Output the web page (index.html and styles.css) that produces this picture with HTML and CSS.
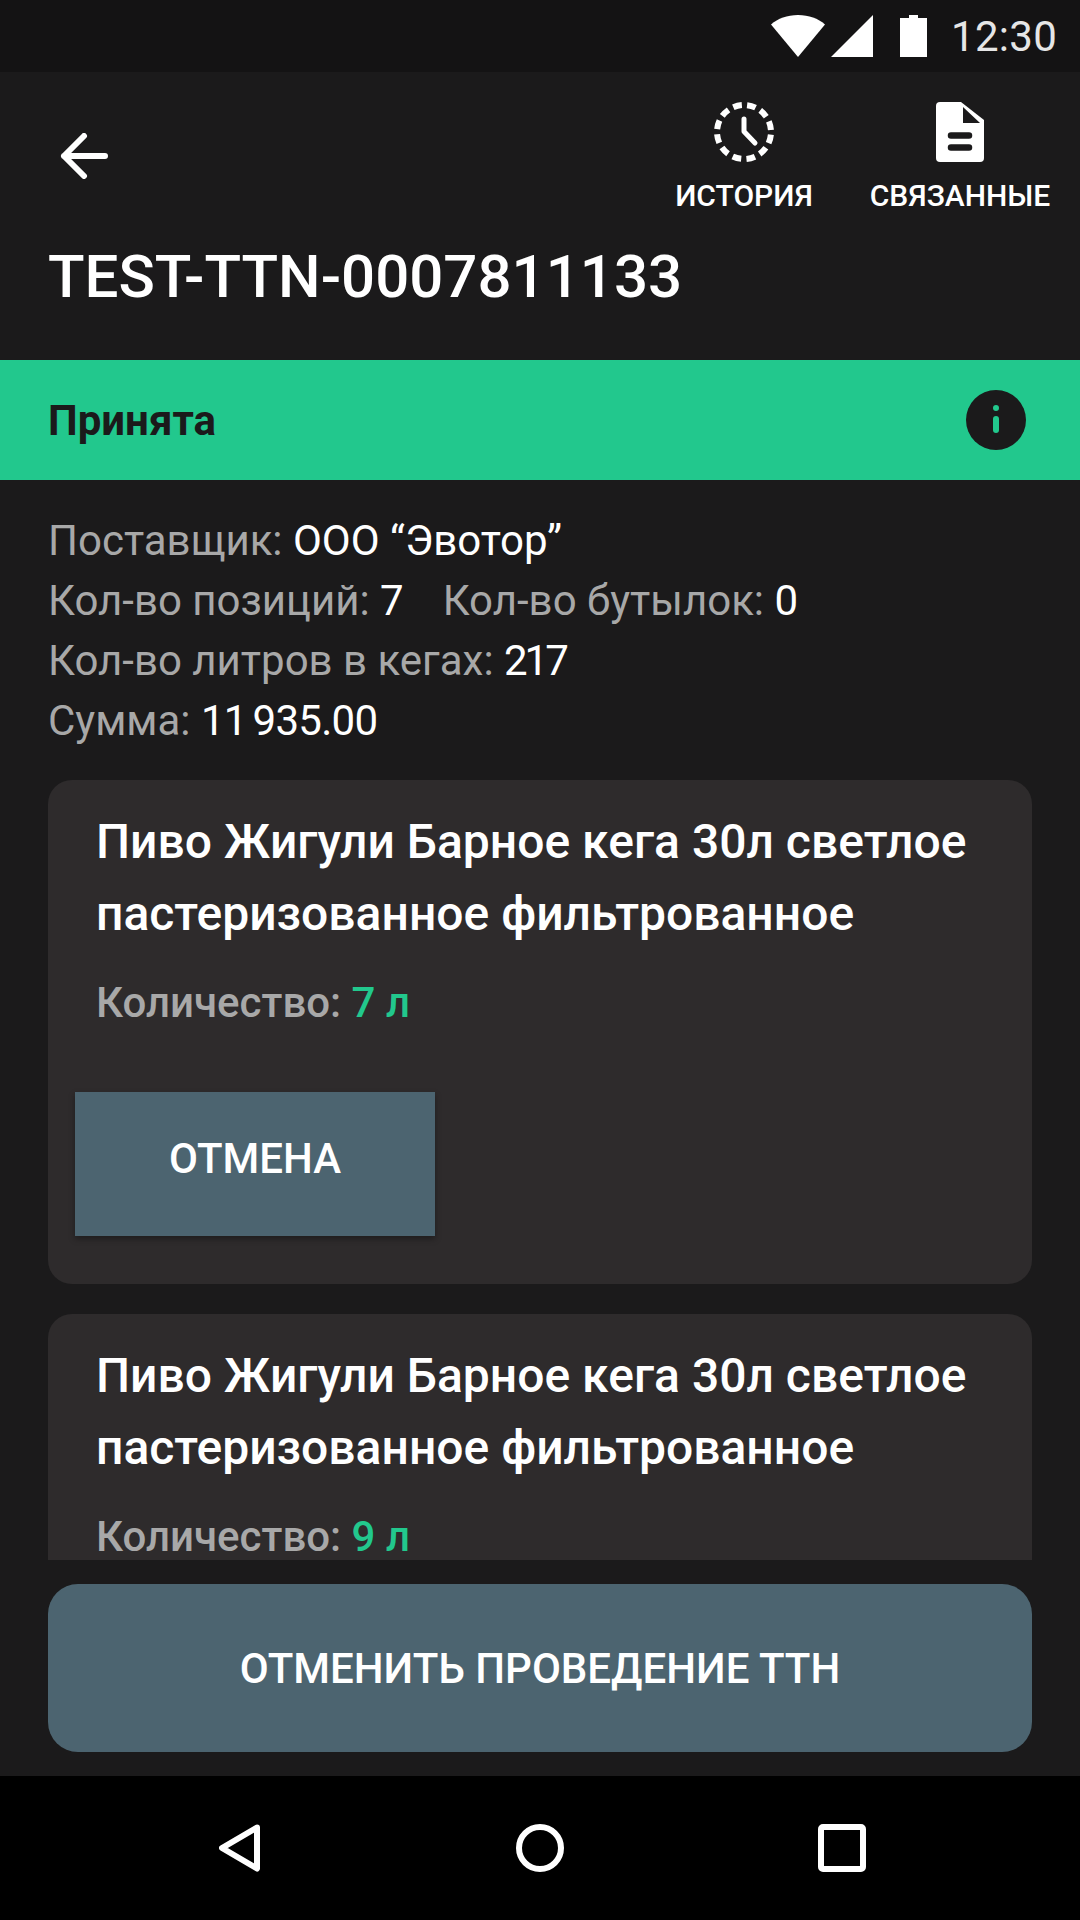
FILE: index.html
```html
<!doctype html>
<html lang="ru">
    <head>
        <title>TEST-TTN-0007811133</title>
        <meta http-equiv='Content-Type' content='text/html; charset=utf-8'>
        <meta name="viewport" content="width=device-width, initial-scale=1">
        <link rel="stylesheet" href="styles.css">
    </head>
    <body>
        <div class="app">
            <div class="status-bar">
                <svg class="wifi" width="54" height="42" viewBox="0 0 54 42"><path d="M27 42 0 9.500C7 3.500 16 0 27 0s20 3.500 27 9.500z" fill="#fff"/></svg>
                <svg class="signal" width="42" height="42" viewBox="0 0 42 42"><path d="M42 0v42H0z" fill="#fff"/></svg>
                <svg class="battery" width="27" height="42" viewBox="0 0 27 42"><path d="M0 3h9V0h9v3h9v39H0z" fill="#fff"/></svg>
                <span class="clock">12:30</span>
            </div>

            <header class="header">
                <div class="toolbar">
                    <svg class="back" width="48" height="46" viewBox="0 0 48 46"><path d="M45 23H4M24 3 4 23l20 20" fill="none" stroke="#fff" stroke-width="6" stroke-linecap="round" stroke-linejoin="round"/></svg>
                    <div class="actions">
                        <div class="action action-history">
                            <svg width="60" height="60" viewBox="0 0 60 60">
                                <circle cx="30" cy="30" r="27" fill="none" stroke="#fff" stroke-width="6" stroke-dasharray="8.700 5.437" stroke-dashoffset="-2.720"/>
                                <path d="M30 17v12.500L41 41" fill="none" stroke="#fff" stroke-width="5" stroke-linecap="round" stroke-linejoin="round"/>
                            </svg>
                            <span>ИСТОРИЯ</span>
                        </div>
                        <div class="action action-linked">
                            <svg width="48" height="60" viewBox="0 0 48 60">
                                <path d="M4 0h21l23 18v38a4 4 0 0 1-4 4H4a4 4 0 0 1-4-4V4a4 4 0 0 1 4-4z" fill="#fff"/>
                                <path d="M27 5v16h17z" fill="#1b1a1b"/>
                                <path d="M15 33.500h18M15 45.500h18" stroke="#1b1a1b" stroke-width="6.500" stroke-linecap="round"/>
                            </svg>
                            <span>СВЯЗАННЫЕ</span>
                        </div>
                    </div>
                </div>
                <h1 class="title">TEST-TTN-0007811133</h1>
            </header>

            <div class="status-band">
                <span>Принята</span>
                <svg width="60" height="60" viewBox="0 0 60 60">
                    <circle cx="30" cy="30" r="30" fill="#1b1a1b"/>
                    <circle cx="30" cy="18" r="3" fill="#22c88d"/>
                    <path d="M30 29v11" stroke="#22c88d" stroke-width="6" stroke-linecap="round"/>
                </svg>
            </div>

            <section class="summary">
                <div>Поставщик: <b>ООО “Эвотор”</b></div>
                <div>Кол-во позиций: <b class="num">7</b><span class="summary-gap">Кол-во бутылок: <b>0</b></span></div>
                <div>Кол-во литров в кегах: <b class="num">217</b></div>
                <div>Сумма: <b class="sum">11 935.00</b></div>
            </section>

            <main class="list">
                <article class="card">
                    <h2>Пиво Жигули Барное кега 30л светлое пастеризованное фильтрованное</h2>
                    <p class="qty">Количество: <span>7 л</span></p>
                    <button class="btn-cancel">ОТМЕНА</button>
                </article>
                <article class="card">
                    <h2>Пиво Жигули Барное кега 30л светлое пастеризованное фильтрованное</h2>
                    <p class="qty">Количество: <span>9 л</span></p>
                </article>
            </main>

            <footer class="footer">
                <button class="btn-main">ОТМЕНИТЬ ПРОВЕДЕНИЕ ТТН</button>
            </footer>

            <nav class="nav-bar">
                <svg width="42" height="48" viewBox="0 0 42 48"><path d="M38 3.500 3 24l35 20.500z" fill="none" stroke="#fff" stroke-width="6" stroke-linejoin="round"/></svg>
                <svg width="48" height="48" viewBox="0 0 48 48"><circle cx="24" cy="24" r="21" fill="none" stroke="#fff" stroke-width="6"/></svg>
                <svg width="48" height="48" viewBox="0 0 48 48"><rect x="3" y="3" width="42" height="42" rx="2" fill="none" stroke="#fff" stroke-width="6"/></svg>
            </nav>
        </div>
    </body>
</html>
```

FILE: styles.css
```css
body {
    margin: 0;
    background: #1b1a1b;
    font-family: Roboto, sans-serif;
    color: #fff;
}
.app {
    display: flex;
    flex-direction: column;
    width: 1080px;
    height: 1920px;
    overflow: hidden;
}
.status-bar {
    display: flex;
    align-items: center;
    height: 72px;
    flex-shrink: 0;
    padding-left: 771px;
    box-sizing: border-box;
    background: #141314;
}
.status-bar svg {
    flex-shrink: 0;
}
.signal {
    margin-left: 6px;
}
.battery {
    margin-left: 27px;
}
.clock {
    margin-left: 24px;
    font-size: 42px;
    letter-spacing: 0.300px;
    color: #e6e6e6;
}
.header {
    height: 288px;
    flex-shrink: 0;
    box-sizing: border-box;
    padding: 30px 0 0 48px;
}
.toolbar {
    display: flex;
    justify-content: space-between;
}
.back {
    margin: 31px 0 0 12px;
}
.actions {
    display: flex;
}
.action {
    display: flex;
    flex-direction: column;
    align-items: center;
    gap: 16px;
    font-size: 30px;
}
.action span {
    font-weight: 500;
}
.action-history {
    width: 216px;
}
.action-linked {
    width: 216px;
    margin-right: 12px;
}
.title {
    margin: 29px 0 0;
    font-size: 60px;
    font-weight: 500;
    line-height: 70px;
}
.status-band {
    display: flex;
    justify-content: space-between;
    align-items: center;
    height: 120px;
    flex-shrink: 0;
    box-sizing: border-box;
    padding: 0 54px 0 48px;
    background: #22c88d;
    color: #1b1a1b;
    font-size: 42px;
    font-weight: 700;
}
.summary {
    flex-shrink: 0;
    padding: 31px 48px 0;
    height: 300px;
    box-sizing: border-box;
    font-size: 42px;
    line-height: 60px;
    color: #a8a8a8;
}
.summary b {
    font-weight: 400;
    color: #fff;
}
.summary .num {
    letter-spacing: -3px;
}
.summary .sum {
    word-spacing: -4px;
    letter-spacing: -0.700px;
}
.summary-gap {
    margin-left: 42px;
}
.list {
    flex: 1;
    min-height: 0;
    overflow: hidden;
    padding: 0 48px;
}
.card {
    box-sizing: border-box;
    height: 504px;
    margin-bottom: 30px;
    padding: 26px 27px 0;
    background: #2e2b2c;
    border-radius: 24px;
}
.card h2 {
    margin: 0;
    padding: 0 21px;
    font-size: 48px;
    font-weight: 500;
    line-height: 72px;
}
.qty {
    margin: 23px 0 0;
    padding: 0 21px;
    font-size: 42px;
    font-weight: 500;
    line-height: 60px;
    color: #a8a8a8;
}
.qty span {
    color: #22c88d;
}
.btn-cancel {
    display: block;
    width: 360px;
    height: 144px;
    margin-top: 59px;
    padding: 0 0 12px;
    border: 0;
    background: #4c6470;
    box-shadow: 0 3px 6px rgba(0, 0, 0, 0.35);
    color: #fff;
    font-family: Roboto, sans-serif;
    font-size: 42px;
    font-weight: 500;
}
.footer {
    height: 216px;
    flex-shrink: 0;
    box-sizing: border-box;
    padding: 24px 48px 0;
}
.btn-main {
    display: block;
    width: 100%;
    height: 168px;
    padding: 0;
    border: 0;
    border-radius: 30px;
    background: #4c6470;
    color: #fff;
    font-family: Roboto, sans-serif;
    font-size: 42px;
    font-weight: 500;
}
.nav-bar {
    display: flex;
    justify-content: space-between;
    align-items: center;
    height: 144px;
    flex-shrink: 0;
    box-sizing: border-box;
    padding: 0 214px 0 219px;
    background: #000;
}
```
